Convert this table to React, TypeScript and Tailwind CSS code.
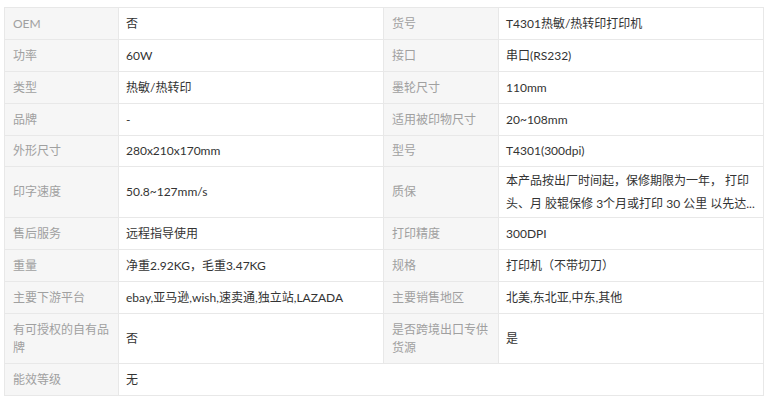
import React from "react";

type Cell = { label: string; value: React.ReactNode };

const rows: { h: string; cells: Cell[] }[] = [
  { h: "h-[32px]", cells: [{ label: "OEM", value: "否" }, { label: "货号", value: "T4301热敏/热转印打印机" }] },
  { h: "h-[32px]", cells: [{ label: "功率", value: "60W" }, { label: "接口", value: "串口(RS232)" }] },
  { h: "h-[32px]", cells: [{ label: "类型", value: "热敏/热转印" }, { label: "墨轮尺寸", value: "110mm" }] },
  { h: "h-[32px]", cells: [{ label: "品牌", value: "-" }, { label: "适用被印物尺寸", value: "20~108mm" }] },
  { h: "h-[31px]", cells: [{ label: "外形尺寸", value: "280x210x170mm" }, { label: "型号", value: "T4301(300dpi)" }] },
  {
    h: "h-[51px]",
    cells: [
      { label: "印字速度", value: "50.8~127mm/s" },
      {
        label: "质保",
        value: (
          <div className="leading-[23px] whitespace-nowrap">
            <div>本产品按出厂时间起，保修期限为一年， 打印</div>
            <div>头、月 胶辊保修 3个月或打印 30 公里 以先达...</div>
          </div>
        ),
      },
    ],
  },
  { h: "h-[32px]", cells: [{ label: "售后服务", value: "远程指导使用" }, { label: "打印精度", value: "300DPI" }] },
  { h: "h-[32px]", cells: [{ label: "重量", value: "净重2.92KG，毛重3.47KG" }, { label: "规格", value: "打印机（不带切刀）" }] },
  { h: "h-[32px]", cells: [{ label: "主要下游平台", value: "ebay,亚马逊,wish,速卖通,独立站,LAZADA" }, { label: "主要销售地区", value: "北美,东北亚,中东,其他" }] },
  { h: "h-[50px]", cells: [{ label: "有可授权的自有品牌", value: "否" }, { label: "是否跨境出口专供货源", value: "是" }] },
];

function Label({ children, h }: { children: React.ReactNode; h: string }) {
  return (
    <div className={`${h} flex items-center bg-[#f6f6f6] border-r border-b border-[#e8e8e8] pl-[8px] pr-[8px] text-[#a0a0a0] leading-[18px]`}>
      <span>{children}</span>
    </div>
  );
}

function Value({ children, h }: { children: React.ReactNode; h: string }) {
  return (
    <div className={`${h} flex items-center bg-white border-r border-b border-[#e8e8e8] pl-[7px] pr-[8px] text-[#333333] leading-[18px]`}>
      {children}
    </div>
  );
}

export default function App() {
  return (
    <div className="w-[771px] h-[407px] bg-white pt-[7px] pl-[4px]" style={{ fontFamily: 'Lato, "Noto Sans CJK SC", sans-serif' }}>
      <div className="w-[760px] border-l border-t border-[#e8e8e8] text-[12px] grid grid-cols-[114px_265px_115px_265px]">
        {rows.map((r, i) => (
          <React.Fragment key={i}>
            <Label h={r.h}>{r.cells[0].label}</Label>
            <Value h={r.h}>{r.cells[0].value}</Value>
            <Label h={r.h}>{r.cells[1].label}</Label>
            <Value h={r.h}>{r.cells[1].value}</Value>
          </React.Fragment>
        ))}
        <Label h="h-[32px]">能效等级</Label>
        <div className="col-span-3 h-[32px] flex items-center bg-white border-r border-b border-[#e8e8e8] pl-[7px] text-[#333333] leading-[18px]">
          无
        </div>
      </div>
    </div>
  );
}
